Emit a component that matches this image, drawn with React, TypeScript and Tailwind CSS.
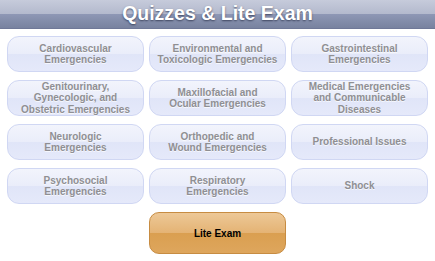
import React from "react";

const items: string[][] = [
  ["Cardiovascular", "Emergencies"],
  ["Environmental and", "Toxicologic Emergencies"],
  ["Gastrointestinal", "Emergencies"],
  ["Genitourinary,", "Gynecologic, and", "Obstetric Emergencies"],
  ["Maxillofacial and", "Ocular Emergencies"],
  ["Medical Emergencies", "and Communicable", "Diseases"],
  ["Neurologic", "Emergencies"],
  ["Orthopedic and", "Wound Emergencies"],
  ["Professional Issues"],
  ["Psychosocial", "Emergencies"],
  ["Respiratory", "Emergencies"],
  ["Shock"],
];

export default function App() {
  return (
    <div
      className="w-[435px] h-[261px] bg-white overflow-hidden"
      style={{ fontFamily: '"Liberation Sans", Arial, sans-serif' }}
    >
      <div className="h-[29px] flex items-center justify-center bg-[linear-gradient(to_bottom,#c6cbdb_0%,#b3b9cd_50%,#8e97b5_50%,#78829f_100%)] border-b border-[#6f7897]">
        <span className="text-white font-bold text-[19.5px] leading-none [text-shadow:0_1px_2px_rgba(30,35,60,0.7)]">
          Quizzes &amp; Lite Exam
        </span>
      </div>
      <div className="px-[7px] pt-[7px] grid grid-cols-3 gap-x-[5px] gap-y-[8px]">
        {items.map((lines, i) => (
          <div
            key={i}
            className="h-[36px] rounded-[12px] border border-[#d0d7f3] bg-[linear-gradient(to_bottom,#f2f4fc_0%,#eaedfa_50%,#e0e5f8_50%,#e5e9fa_100%)] flex flex-col items-center justify-center text-[#8f8f93] font-bold text-[10px] leading-[11.5px] text-center [text-shadow:0_1px_0_rgba(255,255,255,0.7)]"
          >
            {lines.map((l, j) => (
              <span key={j}>{l}</span>
            ))}
          </div>
        ))}
        <div />
        <div className="h-[42px] rounded-[10px] border border-[#c78c42] bg-[linear-gradient(to_bottom,#edc897_0%,#e4b374_50%,#da9f50_50%,#dea65d_100%)] flex items-center justify-center text-black font-bold text-[10px]">
          Lite Exam
        </div>
        <div />
      </div>
    </div>
  );
}
